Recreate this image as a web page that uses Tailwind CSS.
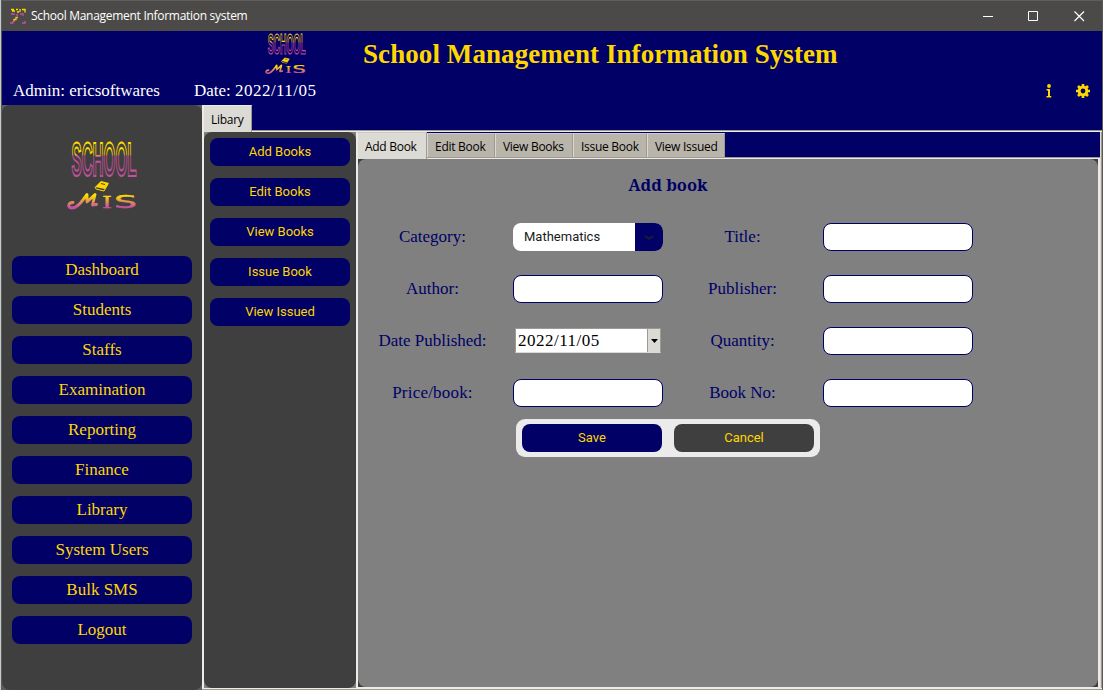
<!DOCTYPE html>
<html lang="en">
<head>
<meta charset="utf-8">
<title>School Management Information system</title>
<script src="https://cdn.jsdelivr.net/npm/@tailwindcss/browser@4"></script>
</head>
<body class="w-[1103px] h-[690px] overflow-hidden bg-[#4c4a48]">
<svg class="absolute w-0 h-0">
  <defs>
    <linearGradient id="g1" x1="0" y1="0" x2="0" y2="38" gradientUnits="userSpaceOnUse"><stop offset=".4" stop-color="#ffde00"/><stop offset=".46" stop-color="#c54fa0"/></linearGradient>
    <linearGradient id="g2" x1="0" y1="54" x2="0" y2="70" gradientUnits="userSpaceOnUse"><stop offset=".15" stop-color="#ffde00"/><stop offset=".9" stop-color="#c54fa0"/></linearGradient>
  </defs>
  <symbol id="logo" viewBox="0 0 70 72">
    <g font-family="Liberation Sans, sans-serif" font-weight="bold" font-size="49" fill="none" stroke="url(#g1)">
      <text x="4.500" y="36.500" textLength="65" lengthAdjust="spacingAndGlyphs" stroke-width="2.100">SCHOOL</text>
    </g>
    <path d="M34 42l8 2-4 6-10-2z" fill="#ffd500"/><path d="M28 48l1 2 8 2 4-7M32 45l5 1" stroke="#ffd500" stroke-width="1" fill="none"/><path d="M34 44.500l4 1" stroke="#3f3f3f" fill="none"/>
    <path d="M6 63.500c-5 0-6 5.500-1 5.500 7 0 11-9 15-13.500l0 7.500 8-7.500-2.500 10.500 4-.5" fill="none" stroke="url(#g2)" stroke-width="2.900" stroke-linecap="round" stroke-linejoin="round"/>
    <g font-family="DejaVu Serif, serif" font-size="17" fill="url(#g2)" stroke="url(#g2)" stroke-width=".4"><text x="35" y="68.500" textLength="10" lengthAdjust="spacingAndGlyphs">I</text></g>
    <g font-family="DejaVu Sans, sans-serif" font-size="17" fill="url(#g2)" stroke="url(#g2)" stroke-width=".4"><text x="47" y="68.500" textLength="23" lengthAdjust="spacingAndGlyphs">S</text></g>
  </symbol>
</svg>
<div class="flex w-full h-full border-l border-[#c3cbcb]">
<div class="flex flex-col w-[1102px] h-full border-x border-[#5a5a58]">
  <header class="flex h-[31px] shrink-0 items-center border-t border-[#5f5e5c] bg-[#4c4a48] text-white">
    <svg class="ml-2 w-4 h-4 shrink-0" viewBox="0 0 16 16" fill="none" stroke-width="1.300"><path d="M1 1.500h3M6 1.500h2M10 1v3M12 1.500h3v3M2 3h3M7 4h2" stroke="#ffd800"/><path d="M1 6h3v1M6 7h2M10 6h2M13 5v3M0 15h3v-2M12 15h3v-2" stroke="#c54fa0"/><path d="M8 9.500H6v2H4v2" stroke="#ffb43c"/></svg>
    <div class="ml-[5px] w-[217px] whitespace-nowrap font-['Open_Sans',sans-serif] text-[12px] leading-4 tracking-[-0.29px]"><span>School Management Information system</span></div>
    <div class="ml-auto flex items-center mr-[17px] pb-px">
      <svg class="w-[102px] h-[12px]" viewBox="0 0 102 12" fill="none" stroke="#fff"><path d="M0 6.500h10M45.500 1.500h9v9h-9z"/><path d="M91.500 1.500l9.500 9.500M101 1.500L91.500 11" stroke-width="1.200"/></svg>
    </div>
  </header>
  <section class="flex h-[74px] shrink-0 bg-[#000066] font-['Liberation_Serif',serif] text-white text-[17px] leading-5">
    <div class="flex flex-col justify-end w-[361px] pb-[4px] relative">
      <svg class="absolute left-[263px] top-[2px] w-[41px] h-[42px]"><use href="#logo"/></svg>
      <div class="flex pl-[11px]"><span class="w-[181px]">Admin: ericsoftwares</span><span class="whitespace-pre">Date: <span class="tracking-[0.45px]">2022/11/05</span></span></div>
    </div>
    <h1 class="pt-[8px] text-[27px] leading-[31px] font-bold text-[#ffd700] whitespace-nowrap tracking-[0.08px]">School Management Information System</h1>
    <div class="ml-auto flex items-center gap-[24px] self-end pb-[7px] pr-[12px] text-[#ffd700]">
      <svg class="w-[6px] h-[14px]" viewBox="0 0 6 14" fill="currentColor"><circle cx="3" cy="2" r="1.900"/><path d="M.5 5H4v7h1.300v1.500H.5V12H2V6.500H.5z"/></svg>
      <svg class="w-[14px] h-[14px]" viewBox="0 0 14 14"><circle cx="7" cy="7" r="3.900" fill="none" stroke="currentColor" stroke-width="3"/><g stroke="currentColor" stroke-width="2.600"><path d="M7 0v3M7 11v3M0 7h3M11 7h3M2 2l2 2M10 10l2 2M12 2l-2 2M4 10l-2 2"/></g></svg>
    </div>
  </section>
  <div class="flex h-[585px] shrink-0">
    <aside class="w-[200px] shrink-0 bg-[#5c5c5c] flex">
      <div class="w-full rounded-[8px] bg-[#3f3f3f] flex flex-col items-center">
        <svg class="mt-[34px] w-[70px] h-[72px] shrink-0"><use href="#logo"/></svg>
        <nav class="mt-[45px] flex flex-col gap-3 font-['Liberation_Serif',serif] text-[17px] leading-7 text-center text-[#ffd700] *:w-[180px] *:h-7 *:rounded-[8px] *:bg-[#000066]">
          <a>Dashboard</a><a>Students</a><a>Staffs</a><a>Examination</a><a>Reporting</a><a>Finance</a><a>Library</a><a>System Users</a><a>Bulk SMS</a><a>Logout</a>
        </nav>
      </div>
    </aside>
    <main class="flex flex-col w-[900px] bg-[#000066] font-['Open_Sans',sans-serif] text-[12px] text-black">
      <div class="h-[25px] shrink-0 flex">
        <div class="w-[50px] h-[27px] relative z-10 bg-[#dcdad5] border-t border-l-2 border-r border-t-[#eeebe7] border-l-[#eeebe7] border-r-[#9e9a91] pl-[7px] leading-[28px] tracking-[-0.28px]">Libary</div>
      </div>
      <div class="flex flex-1 border-t border-t-[#9e9a91] border-b border-b-[#9e9a91]">
      <div class="flex flex-1 border-t border-l-2 border-b border-[#eeebe7]">
        <div class="w-[152px] bg-[#808080]">
          <div class="h-[556px] rounded-[8px] bg-[#3f3f3f] pt-[6px] pl-[6px] flex flex-col gap-3 font-['Roboto',sans-serif] text-[13px] leading-7 text-center text-[#ffd700] *:w-[140px] *:h-7 *:rounded-[8px] *:bg-[#000066]">
            <a>Add Books</a><a>Edit Books</a><a>View Books</a><a>Issue Book</a><a>View Issued</a>
          </div>
        </div>
        <div class="flex flex-col w-[744px]">
          <div class="h-[25px] shrink-0 flex items-end tracking-[-0.28px] *:h-[24px] *:leading-[25px] *:bg-[#bab5ab] *:border-t *:border-l *:border-r *:border-t-[#cdcac3] *:border-l-[#dcdad5] *:border-r-[#9e9a91] *:pl-[7px] *:whitespace-nowrap">
            <div class="w-[71px] h-[27px]! self-start relative z-10 bg-[#dcdad5]! border-l-2! border-l-[#eeebe7]! leading-[28px]!">Add Book</div>
            <div class="w-[68px]">Edit Book</div>
            <div class="w-[78px]">View Books</div>
            <div class="w-[74px]">Issue Book</div>
            <div class="w-[78px]">View Issued</div>
          </div>
          <div class="flex flex-1 border-t border-t-[#9e9a91]">
          <div class="flex-1 border-t border-l-2 border-b border-r-2 border-[#eeebe7] bg-[#3f3f3f]">
            <div class="h-full rounded-[8px] bg-[#808080] text-[#000066] font-['Liberation_Serif',serif] text-[17px]">
              <h2 class="pt-[14px] w-[620px] text-center text-[16.500px] leading-6 font-bold font-['Noto_Serif','DejaVu_Serif_Condensed',serif]">Add book</h2>
              <div class="mt-[26px] grid grid-cols-[149px_161px_149px_161px] auto-rows-[28px] gap-y-6 leading-7 text-center">
                <label>Category:</label>
                <div class="ml-[6px] w-[150px] h-7 rounded-[8px] bg-white flex overflow-hidden font-['Roboto',sans-serif] text-[13px] text-[#1a1a1a]"><span class="w-[122px] pl-[11px] text-left">Mathematics</span><span class="w-7 bg-[#000066] flex items-center justify-center"><svg class="w-[10px] h-[6px] mt-px" viewBox="0 0 10 6" fill="none" stroke="#1c1c30" stroke-width="2" stroke-linecap="round"><path d="M1.500 1.500l3.500 2.300 3.500-2.300"/></svg></span></div>
                <label>Title:</label><div class="ml-[6px] w-[150px] rounded-[8px] border border-[#000066] bg-white"></div>
                <label>Author:</label><div class="ml-[6px] w-[150px] rounded-[8px] border border-[#000066] bg-white"></div>
                <label>Publisher:</label><div class="ml-[6px] w-[150px] rounded-[8px] border border-[#000066] bg-white"></div>
                <label>Date Published:</label>
                <div class="ml-[8px] mt-[1px] w-[146px] h-[25px] bg-white border border-[#9e9a91] border-r-[#9e9a91] border-b-[#dcdad5] flex text-black text-left leading-6"><span class="w-[131px] pl-[2px] tracking-[0.5px]">2022/11/05</span><span class="w-[13px] bg-[#dcdad5] border-l border-[#9e9a91] flex items-center justify-center"><svg class="w-[7px] h-[4px]" viewBox="0 0 7 4"><path d="M0 0h7L3.500 4z"/></svg></span></div>
                <label>Quantity:</label><div class="ml-[6px] w-[150px] rounded-[8px] border border-[#000066] bg-white"></div>
                <label class="tracking-[0.2px]">Price/book:</label><div class="ml-[6px] w-[150px] rounded-[8px] border border-[#000066] bg-white"></div>
                <label>Book No:</label><div class="ml-[6px] w-[150px] rounded-[8px] border border-[#000066] bg-white"></div>
              </div>
              <div class="mt-3 ml-[158px] w-[304px] h-[38px] rounded-[9px] bg-[#ebebeb] p-[5px] pl-[6px] flex gap-3 font-['Roboto',sans-serif] text-[13px] leading-7 text-center text-[#ffd700]">
                <a class="w-[140px] rounded-[8px] bg-[#000066]">Save</a><a class="w-[140px] rounded-[8px] bg-[#3f3f3f]">Cancel</a>
              </div>
            </div>
          </div>
          </div>
        </div>
        <div class="flex-1 bg-[#dcdad5] border-r border-[#9e9a91]"></div>
      </div>
      </div>
    </main>
  </div>
</div>
</div>
</body>
</html>
